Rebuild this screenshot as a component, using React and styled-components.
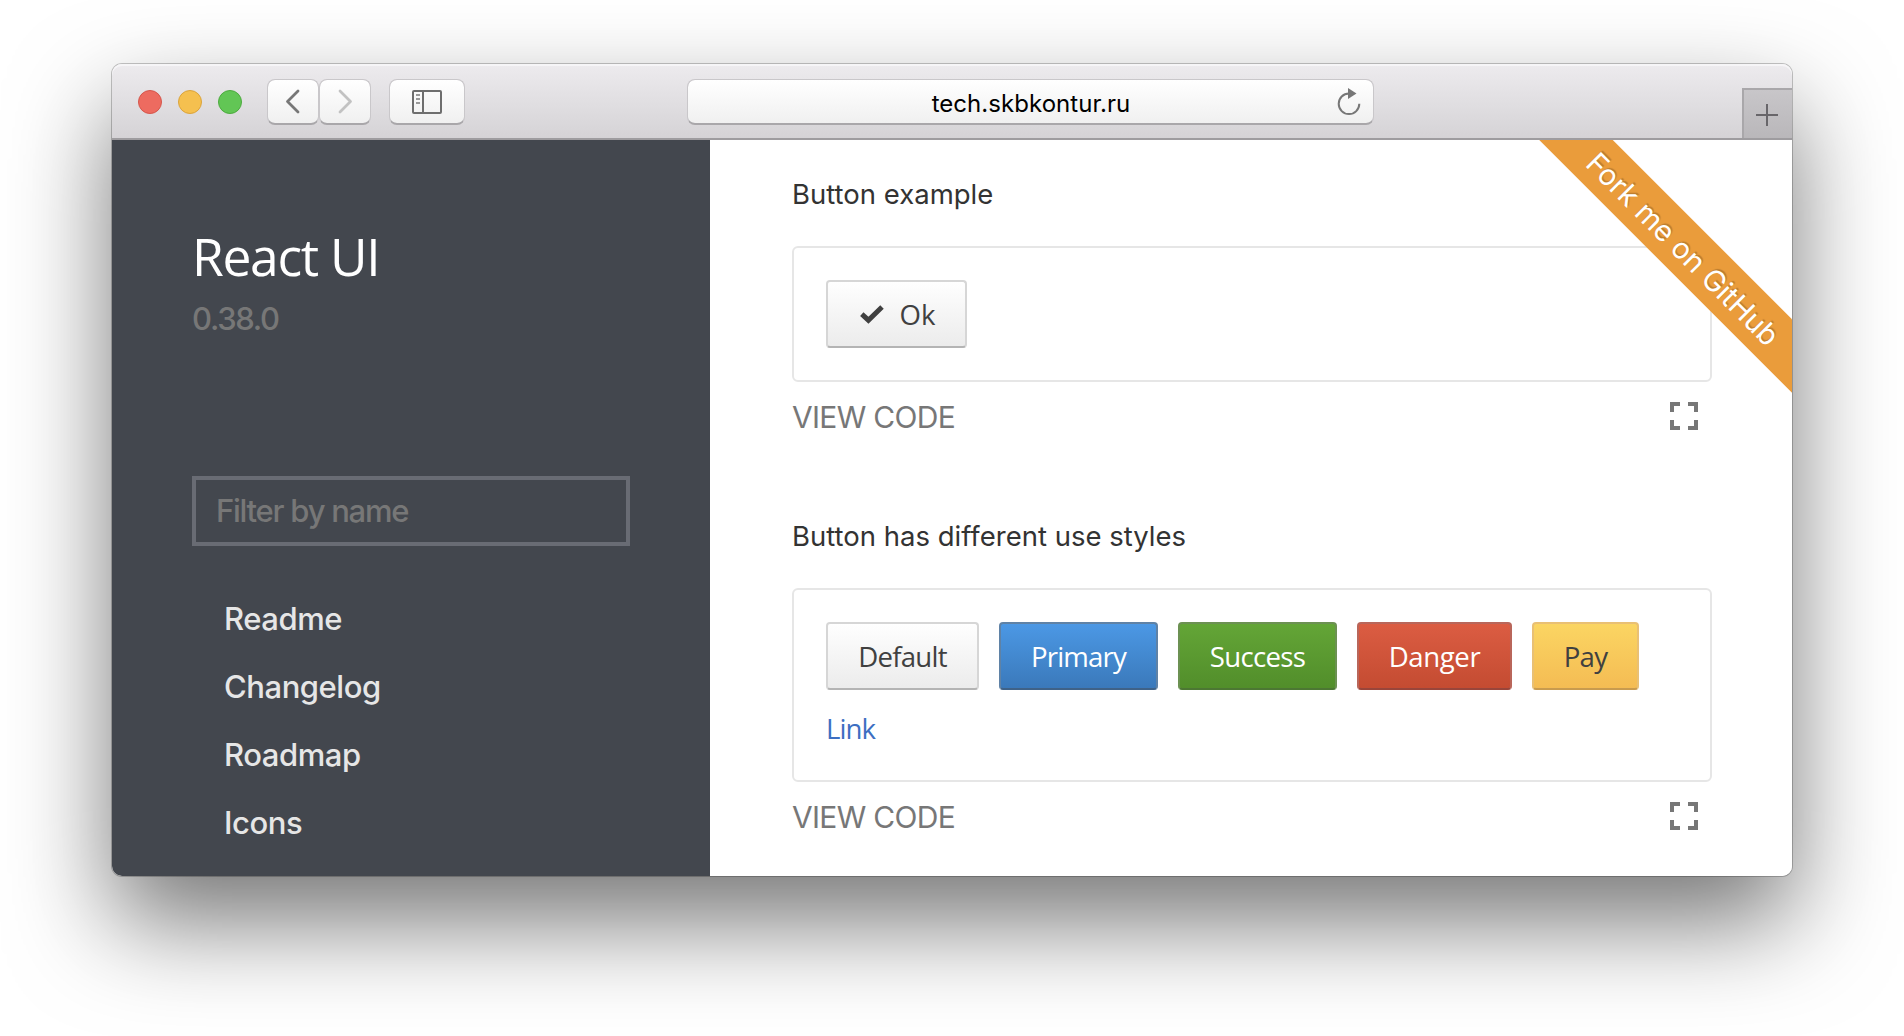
import React from "react";
import styled, { createGlobalStyle, css } from "styled-components";

const Global = createGlobalStyle`
  * { box-sizing: border-box; }
  html, body { margin: 0; background: #fff; }
  body { width: 1904px; height: 1036px; overflow: hidden; }
`;

const ui = css`font-family: Inter, "Liberation Sans", sans-serif;`;
const segoe = css`font-family: "Open Sans", "Noto Sans", sans-serif;`;

const Stage = styled.div`
  width: 1904px;
  height: 1036px;
  padding: 64px 112px;
  overflow: hidden;
  ${ui}
`;

const Window = styled.div`
  width: 1680px;
  height: 812px;
  display: flex;
  flex-direction: column;
  border-radius: 10px;
  box-shadow: 0 0 0 1px rgba(0, 0, 0, 0.22), 0 46px 100px rgba(0, 0, 0, 0.54);
`;

const Toolbar = styled.header`
  height: 76px;
  flex: none;
  display: flex;
  align-items: flex-start;
  padding: 15px 0 0 26px;
  border-bottom: 2px solid #9e9c9f;
  border-radius: 10px 10px 0 0;
  background: linear-gradient(#edebee, #d5d3d6);
  box-shadow: inset 0 2px 0 #f6f5f7;
`;

const Lights = styled.div`
  display: flex;
  gap: 16px;
  padding-top: 11px;
`;

const Light = styled.span`
  width: 24px;
  height: 24px;
  border-radius: 50%;
  background: ${(p) => p.$fill};
  border: 1px solid ${(p) => p.$edge};
`;

const chrome = css`
  height: 46px;
  border: 1px solid #c9c7ca;
  border-bottom: 2px solid #a9a7aa;
  border-radius: 8px;
  background: linear-gradient(#fff, #f0f0f0);
  background-clip: padding-box;
`;

const ToolButton = styled.button`
  ${chrome}
  width: ${(p) => p.$width}px;
  margin-left: ${(p) => p.$gap}px;
  padding: 0;
  display: flex;
  align-items: center;
  justify-content: center;
`;

const Address = styled.div`
  ${chrome}
  width: 687px;
  margin-left: 222px;
  display: flex;
  align-items: center;
  padding: 0 11px 0 38px;
  font-size: 24px;
  color: #000;
`;

const Host = styled.span`
  flex: 1;
  padding-top: 3px;
  text-align: center;
  letter-spacing: 0.05px;
`;

const NewTab = styled.button`
  width: 50px;
  height: 50px;
  margin: 9px 0 0 auto;
  padding: 2px 2px 0 0;
  border: solid #a9a7aa;
  border-width: 2px 0 0 2px;
  background: linear-gradient(#c8c6c9, #b9b7ba);
  display: flex;
  align-items: center;
  justify-content: center;
`;

const Page = styled.div`
  flex: 1;
  display: flex;
  overflow: hidden;
  border-radius: 0 0 10px 10px;
  background: #fff;
`;

const Sidebar = styled.aside`
  width: 598px;
  flex: none;
  padding: 86px 80px 0;
  background: #43474e;
`;

const Title = styled.h1`
  ${segoe}
  margin: 0;
  font-size: 51.5px;
  font-weight: 400;
  line-height: 60px;
  letter-spacing: -1.3px;
  color: #fff;
`;

const Version = styled.div`
  margin-top: 13px;
  font-size: 31px;
  font-weight: 450;
  line-height: 40px;
  letter-spacing: -1.3px;
  color: #777;
`;

const Filter = styled.input`
  ${ui}
  display: block;
  width: 438px;
  height: 70px;
  margin-top: 137px;
  padding: 0 20px 2px;
  border: 4px solid #696c74;
  background: transparent;
  font-size: 31px;
  font-weight: 450;
  letter-spacing: -1.25px;
  outline: none;
  &::placeholder { color: #777; opacity: 1; }
`;

const Nav = styled.nav`
  display: flex;
  flex-direction: column;
  padding: 39px 0 0 32px;
`;

const NavItem = styled.a`
  font-size: 31px;
  font-weight: 450;
  line-height: 68px;
  letter-spacing: -0.45px;
  color: #e6e6e6;
`;

const Main = styled.main`
  position: relative;
  flex: 1;
  padding: 34px 80px 0 82px;
  overflow: hidden;
`;

const Example = styled.section`
  margin-bottom: 66px;
`;

const Heading = styled.h2`
  margin: 0 0 32px;
  font-size: 27.5px;
  font-weight: 400;
  line-height: 40px;
  color: #333;
`;

const Box = styled.div`
  border: 2px solid #e6e6e6;
  border-radius: 6px;
  padding: 32px;
`;

const Row = styled.div`
  display: flex;
  gap: 20px;
`;

const palette = {
  default: ["#fff", "#ebebeb", "#404040"],
  primary: ["#4c99e6", "#3a78b9", "#fff"],
  success: ["#64a637", "#518d2a", "#fff"],
  danger: ["#dc5d43", "#c34b31", "#fff"],
  pay: ["#fbd663", "#f4bb53", "#404040"],
};

const edges = {
  default: ["#d6d6d6", "#b4b4b4"],
  primary: ["#5f82a6", "#3f6288"],
  success: ["#6c9152", "#4c7733"],
  danger: ["#b9665a", "#99453a"],
  pay: ["#e9c074", "#c99b4e"],
};

const Button = styled.button`
  ${segoe}
  width: ${(p) => p.$width}px;
  height: 68px;
  padding: 0 0 0 ${(p) => p.$shift || 0}px;
  display: flex;
  align-items: center;
  justify-content: center;
  gap: 16px;
  border: 2px solid ${(p) => edges[p.$use][0]};
  border-bottom-color: ${(p) => edges[p.$use][1]};
  border-radius: 4px;
  background: linear-gradient(${(p) => palette[p.$use][0]}, ${(p) => palette[p.$use][1]});
  background-origin: border-box;
  color: ${(p) => palette[p.$use][2]};
  font-size: 27.6px;
  line-height: 40px;
  letter-spacing: ${(p) => p.$tracking || 0}px;
`;

const Link = styled.a`
  ${segoe}
  display: block;
  margin-top: 19px;
  font-size: 27.6px;
  line-height: 39px;
  letter-spacing: -0.9px;
  color: #3d6fc2;
`;

const Footer = styled.div`
  height: 68px;
  display: flex;
  align-items: center;
  justify-content: space-between;
  padding: 0 14px 0 0;
`;

const ViewCode = styled.span`
  padding-top: 2px;
  font-size: 30px;
  letter-spacing: -0.7px;
  color: #777;
`;

const Ribbon = styled.a`
  position: absolute;
  top: 82px;
  right: -91.5px;
  width: 400px;
  height: 52px;
  transform: rotate(45deg);
  background: #ea9c3b;
  color: #fff;
  font-size: 29.2px;
  line-height: 56px;
  text-align: center;
  text-shadow: 0 -2px 1px rgba(0, 0, 0, 0.2);
`;

const Expand = () => (
  <svg width="28" height="28" viewBox="0 0 28 28" fill="none" stroke="#777" strokeWidth="4">
    <path d="M2 10V2H10M18 2H26V10M26 18V26H18M10 26H2V18" />
  </svg>
);

const Chevron = ({ left }) => (
  <svg width="16" height="26" viewBox="0 0 16 26" fill="none" stroke={left ? "#777" : "#c2c2c2"} strokeWidth="2.8" strokeLinecap="round" strokeLinejoin="round">
    <path d={left ? "M13 2L2.5 12.5L13 23" : "M3 2L13.5 12.5L3 23"} />
  </svg>
);

const Card = ({ title, children }) => (
  <Example>
    <Heading>{title}</Heading>
    <Box>{children}</Box>
    <Footer>
      <ViewCode>VIEW CODE</ViewCode>
      <Expand />
    </Footer>
  </Example>
);

export default function App() {
  return (
    <Stage>
      <Global />
      <Window>
        <Toolbar>
          <Lights>
            <Light $fill="#ed6b60" $edge="#d5564c" />
            <Light $fill="#f5c04f" $edge="#dba43c" />
            <Light $fill="#62c655" $edge="#4dab3f" />
          </Lights>
          <ToolButton $width={52} $gap={25}><Chevron left /></ToolButton>
          <ToolButton $width={52} $gap={0}><Chevron /></ToolButton>
          <ToolButton $width={76} $gap={18}>
            <svg width="30" height="24" viewBox="0 0 30 24" fill="none" stroke="#6e6e6e" strokeWidth="2">
              <rect x="1" y="1" width="28" height="22" rx="1" />
              <path d="M11 1V23" />
              <path d="M4 5H8M4 9H8M4 13H8" stroke="#9a9a9a" />
            </svg>
          </ToolButton>
          <Address>
            <Host>tech.skbkontur.ru</Host>
            <svg width="26" height="28" viewBox="0 0 26 28">
              <path d="M13 5.5A10.3 10.3 0 1 0 23.3 15.8" fill="none" stroke="#777" strokeWidth="2" />
              <path d="M12 0L20.5 5.5L12 11Z" fill="#777" />
            </svg>
          </Address>
          <NewTab>
            <svg width="22" height="22" viewBox="0 0 22 22" stroke="#68666a" strokeWidth="2">
              <path d="M0 11H22M11 0V22" />
            </svg>
          </NewTab>
        </Toolbar>
        <Page>
          <Sidebar>
            <Title>React UI</Title>
            <Version>0.38.0</Version>
            <Filter placeholder="Filter by name" />
            <Nav>
              <NavItem>Readme</NavItem>
              <NavItem>Changelog</NavItem>
              <NavItem>Roadmap</NavItem>
              <NavItem>Icons</NavItem>
            </Nav>
          </Sidebar>
          <Main>
            <Card title="Button example">
              <Row>
                <Button $use="default" $width={141} $shift={2}>
                  <svg width="24" height="19" viewBox="0 0 24 19" fill="none" stroke="#404040" strokeWidth="5">
                    <path d="M1.8 9.2L8.4 15.2L22 2" />
                  </svg>
                  Ok
                </Button>
              </Row>
            </Card>
            <Card title="Button has different use styles">
              <Row>
                <Button $use="default" $width={153} $tracking={-0.75}>Default</Button>
                <Button $use="primary" $width={159} $tracking={-0.85}>Primary</Button>
                <Button $use="success" $width={159} $tracking={-0.7}>Success</Button>
                <Button $use="danger" $width={155} $tracking={-0.4}>Danger</Button>
                <Button $use="pay" $width={107} $tracking={-0.8}>Pay</Button>
              </Row>
              <Link>Link</Link>
            </Card>
            <Ribbon>Fork me on GitHub</Ribbon>
          </Main>
        </Page>
      </Window>
    </Stage>
  );
}
